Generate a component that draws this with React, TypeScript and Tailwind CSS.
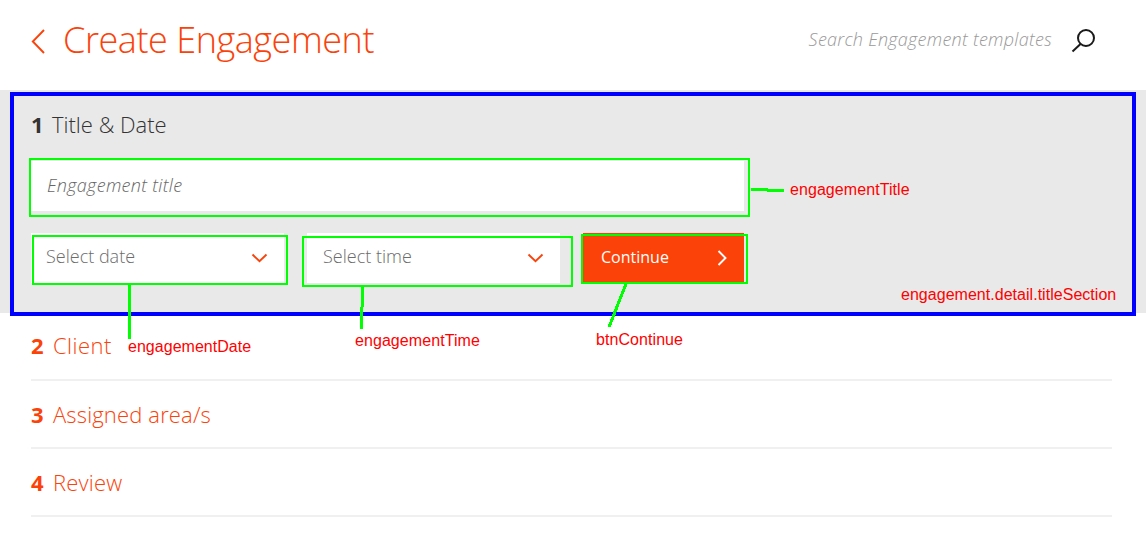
import type { ReactNode } from "react";

const steps = [
  { n: "2", label: "Client", cls: "tracking-[0.45px]", pad: "pt-[17px]" },
  { n: "3", label: "Assigned area/s", cls: "tracking-[0.15px]", pad: "pt-[18px]" },
  { n: "4", label: "Review", cls: "tracking-[0.2px]", pad: "pt-[18px]" },
];

function Chevron({ d, className, w, h }: { d: string; className: string; w: number; h: number }) {
  return (
    <svg className={className} width={w} height={h} viewBox={`0 0 ${w} ${h}`} fill="none" stroke="currentColor" strokeWidth="1.9">
      <path d={d} />
    </svg>
  );
}

function Select({ className, children }: { className: string; children: ReactNode }) {
  return (
    <button className={`flex h-[50px] w-[253px] items-start justify-between bg-white pr-[16px] text-left text-[18px] font-light leading-[24px] text-[#6c6c6c] ${className}`}>
      <span className="pt-[11px]">{children}</span>
      <Chevron className="mt-[20px] text-[#f8430b]" d="M1.5 1.5 L8.5 8.3 L15.5 1.5" w={17} h={10} />
    </button>
  );
}

function Note({ className, children }: { className: string; children: string }) {
  return (
    <span className={`absolute whitespace-nowrap font-['Liberation_Sans',Arial,sans-serif] text-[16px] leading-[18px] text-[#f00] ${className}`}>
      {children}
    </span>
  );
}

export default function App() {
  return (
    <div className="relative h-[548px] w-[1146px] overflow-hidden bg-white font-['Open_Sans',sans-serif]">
      <header className="flex h-[90px] items-start">
        <Chevron className="ml-[31px] mt-[29px] text-[#fb4208]" d="M13 1 L1.8 12.5 L13 24" w={14} h={25} />
        <h1 className="ml-[18px] mt-[16px] whitespace-nowrap text-[36px] font-light leading-[48px] tracking-[-0.45px] text-[#fb4208]">
          Create Engagement
        </h1>
        <div className="ml-auto mr-[50px] flex items-start">
          <span className="mr-[19px] mt-[27px] whitespace-nowrap text-[18px] font-light italic leading-[24px] tracking-[0.27px] text-[#999]">
            Search Engagement templates
          </span>
          <svg className="mt-[28px] text-[#1a1a1a]" width="25" height="25" viewBox="0 0 25 25" fill="none" stroke="currentColor" strokeWidth="2">
            <circle cx="15" cy="10" r="8" />
            <path d="M9.5 16 L1.5 23.5" />
          </svg>
        </div>
      </header>

      <section className="h-[223px] bg-[#e9e9e9] pl-[31px]">
        <h2 className="flex h-[71px] items-start pt-[19px] text-[22px] font-light leading-[30px] text-[#333]">
          <span className="w-[21px] font-bold">1</span>
          <span>Title &amp; Date</span>
        </h2>
        <div className="h-[50px] w-[713px] bg-white pl-[16px] pt-[12px] text-[18px] font-light italic leading-[24px] tracking-[0.32px] text-[#666]">
          <span>Engagement title</span>
        </div>
        <div className="mt-[22px] flex">
          <Select className="pl-[15px]">Select date</Select>
          <Select className="ml-[23px] pl-[16px]">Select time</Select>
          <button className="ml-[23px] flex h-[49px] w-[161px] items-start justify-between bg-[#fb4208] pl-[18px] pr-[17px] text-[16px] leading-[24px] text-white">
            <span className="pt-[12px]">Continue</span>
            <Chevron className="mt-[17px]" d="M1.5 1 L8.5 8 L1.5 15" w={10} h={16} />
          </button>
        </div>
      </section>

      <ol className="ml-[31px] w-[1081px] text-[22px] font-light leading-[30px] text-[#fb4208]">
        {steps.map((s) => (
          <li key={s.n} className={`flex h-[68px] items-start border-b-2 border-[#f0f0f0] ${s.pad}`}>
            <span className="w-[22px] font-bold">{s.n}</span>
            <span className={s.cls}>{s.label}</span>
          </li>
        ))}
      </ol>

      <div className="absolute left-[10px] top-[92px] h-[224px] w-[1126px] border-4 border-[#00f]" />
      <div className="absolute left-[29px] top-[158px] h-[59px] w-[721px] border-2 border-[#0f0]" />
      <div className="absolute left-[32px] top-[235px] h-[50px] w-[256px] border-2 border-[#0f0]" />
      <div className="absolute left-[302px] top-[236px] h-[51px] w-[271px] border-2 border-[#0f0]" />
      <div className="absolute left-[581px] top-[234px] h-[50px] w-[167px] border-2 border-[#0f0]" />
      <svg className="absolute left-0 top-0" width="1146" height="548" viewBox="0 0 1146 548" fill="none" stroke="#00ff00" strokeWidth="3" shapeRendering="crispEdges">
        <path d="M751 189.5 H768 M767 190.5 H784" />
        <path d="M129.5 285 V339" />
        <path d="M362.5 287 V307 M361.5 307 V329" />
        <path d="M626 284 L609 327" />
      </svg>
      <Note className="left-[790px] top-[181px] tracking-[0.07px]">engagementTitle</Note>
      <Note className="left-[901px] top-[286px] tracking-[0.03px]">engagement.detail.titleSection</Note>
      <Note className="left-[128px] top-[338px] tracking-[0.03px]">engagementDate</Note>
      <Note className="left-[355px] top-[332px] tracking-[0.07px]">engagementTime</Note>
      <Note className="left-[596px] top-[331px] tracking-[0.07px]">btnContinue</Note>
    </div>
  );
}
